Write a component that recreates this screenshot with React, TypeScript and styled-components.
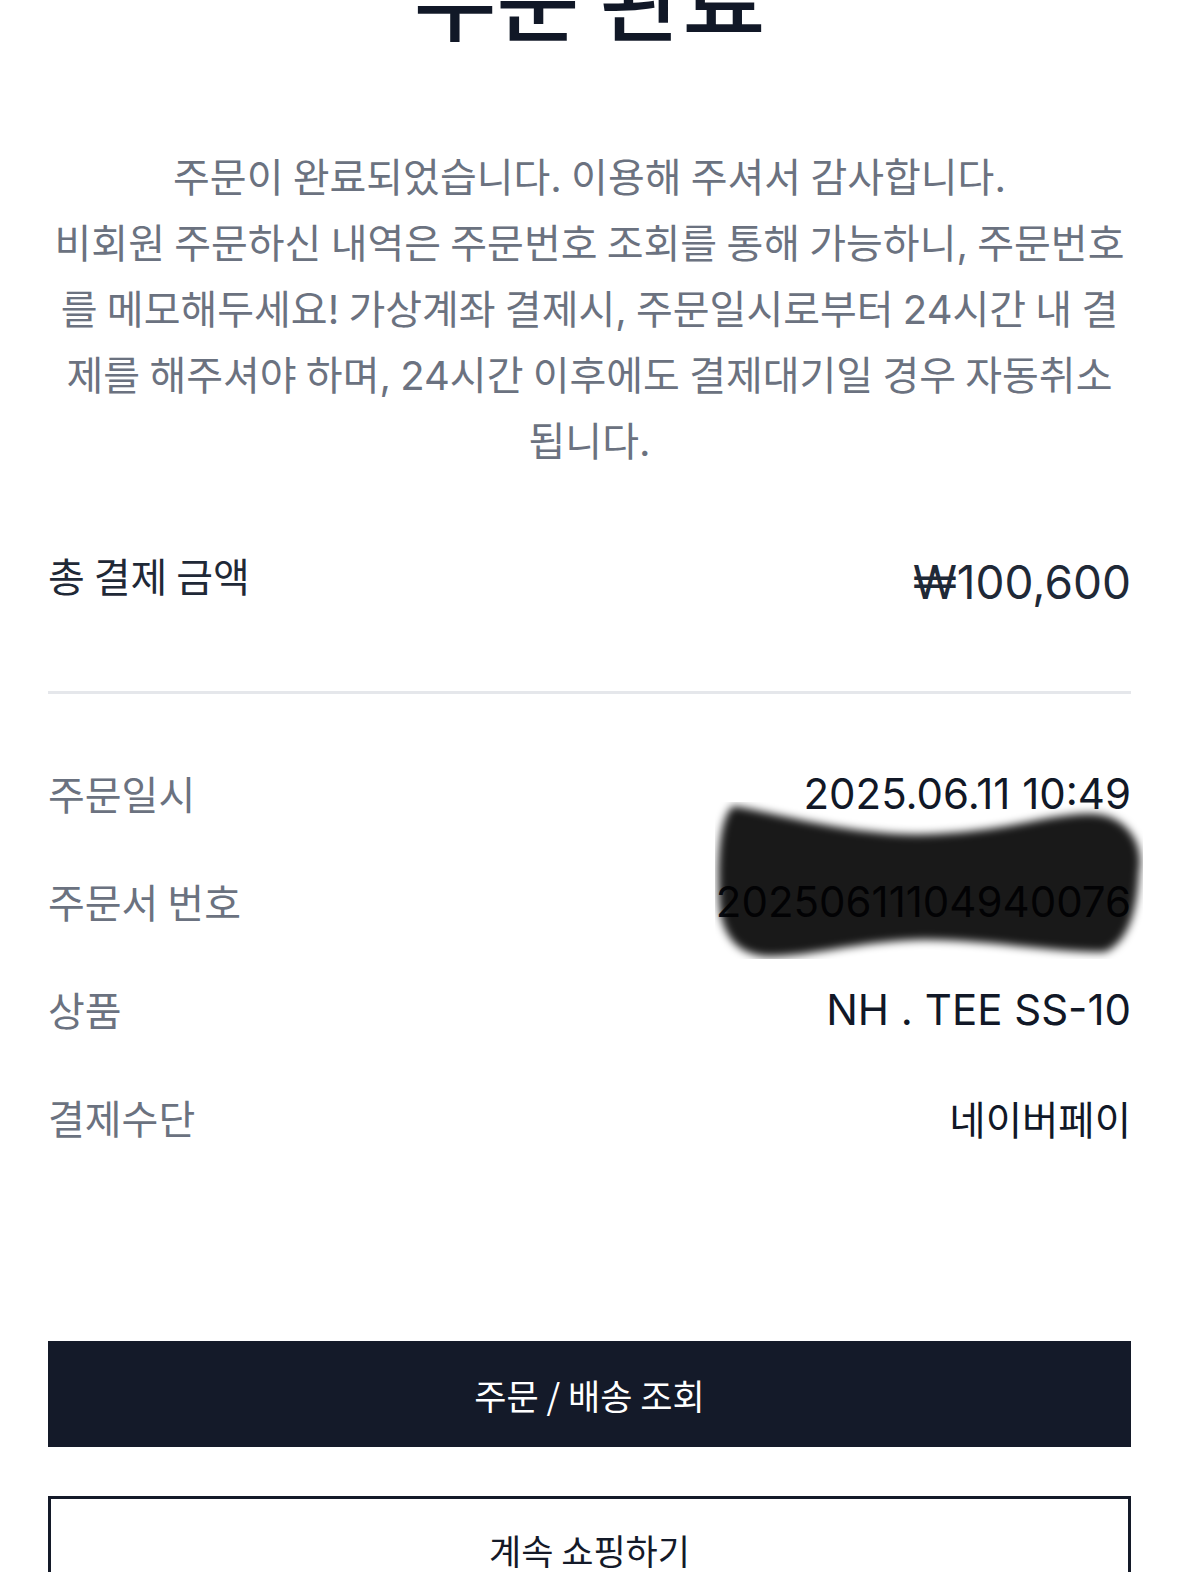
import React from "react";
import styled, { createGlobalStyle } from "styled-components";

const GlobalStyle = createGlobalStyle`
	html, body {
		margin: 0;
		padding: 0;
		background: #ffffff;
	}
	body {
		font-family: "Inter", "Noto Sans CJK KR", sans-serif;
		-webkit-font-smoothing: antialiased;
	}
	* {
		box-sizing: border-box;
	}
`;

const Page = styled.main`
	height: 100vh;
	padding: 0 48px;
	overflow: hidden;
`;

const Title = styled.h1`
	margin: -50px 0 0;
	font-family: "Noto Sans CJK KR", sans-serif;
	font-size: 90px;
	font-weight: 500;
	line-height: 1;
	text-align: center;
	color: #111827;
`;

const Message = styled.p`
	margin: 105px 0 0;
	padding: 0 4px;
	font-family: "Inter", "Noto Sans CJK KR", sans-serif;
	font-size: 40px;
	line-height: 66px;
	word-spacing: -2px;
	text-align: center;
	word-break: break-all;
	color: #6b7280;
`;

const TotalRow = styled.section`
	display: flex;
	justify-content: space-between;
	align-items: flex-start;
	margin-top: 75px;
	padding-bottom: 77px;
	border-bottom: 3px solid #e5e7eb;
`;

const TotalLabel = styled.span`
	font-family: "Noto Sans CJK KR", sans-serif;
	font-size: 40px;
	line-height: 50px;
	color: #1f2937;
`;

const TotalAmount = styled.span`
	font-size: 46px;
	line-height: 64px;
	color: #1f2937;
`;

const InfoList = styled.dl`
	margin: 45px 0 0;
`;

const InfoRow = styled.div`
	position: relative;
	display: flex;
	justify-content: space-between;
	align-items: center;
	height: 108px;
`;

const Label = styled.dt`
	font-family: "Noto Sans CJK KR", sans-serif;
	font-size: 40px;
	color: #6b7280;
`;

const Value = styled.dd<{ $hangul?: boolean }>`
	margin: 0;
	font-size: ${p => (p.$hangul ? "39.5px" : "42px")};
	color: #111827;
`;

const Scribble = styled.svg`
	position: absolute;
	right: -12px;
	top: -45px;
	width: 428px;
	height: 157px;
	pointer-events: none;
`;

const Actions = styled.div`
	display: flex;
	flex-direction: column;
	gap: 49px;
	margin-top: 170px;
`;

const ActionButton = styled.button<{ $variant: "solid" | "outline" }>`
	display: flex;
	align-items: center;
	justify-content: center;
	flex-shrink: 0;
	height: 106px;
	width: 100%;
	border: 3px solid #141a29;
	border-radius: 0;
	background: ${p => (p.$variant === "solid" ? "#141a29" : "#ffffff")};
	color: ${p => (p.$variant === "solid" ? "#ffffff" : "#141a29")};
	font-family: "Noto Sans CJK KR", sans-serif;
	font-size: 35px;
	cursor: pointer;
`;

const rows = [
	{ label: "주문일시", value: "2025.06.11 10:49" },
	{ label: "주문서 번호", value: "20250611104940076", hidden: true },
	{ label: "상품", value: "NH . TEE SS-10" },
	{ label: "결제수단", value: "네이버페이", hangul: true },
];

export default function App() {
	return (
		<>
			<GlobalStyle />
			<Page>
				<Title>주문 완료</Title>
				<Message>
					주문이 완료되었습니다. 이용해 주셔서 감사합니다.
					<br />
					비회원 주문하신 내역은 주문번호 조회를 통해 가능하니, 주문번호를 메모해두세요! 가상계좌
					결제시, 주문일시로부터 24시간 내 결제를 해주셔야 하며, 24시간 이후에도 결제대기일 경우
					자동취소됩니다.
				</Message>

				<TotalRow>
					<TotalLabel>총 결제 금액</TotalLabel>
					<TotalAmount>₩100,600</TotalAmount>
				</TotalRow>

				<InfoList>
					{rows.map(row => (
						<InfoRow key={row.label}>
							<Label>{row.label}</Label>
							<Value $hangul={row.hangul}>{row.value}</Value>
							{row.hidden && (
								// hand-drawn redaction over the order number
								<Scribble viewBox="0 0 428 157">
									<defs>
										<filter id="smudge" x="-10%" y="-10%" width="120%" height="120%">
											<feGaussianBlur stdDeviation="4" />
										</filter>
									</defs>
									<path
										d="M18,4 C60,10 140,36 220,32 C300,28 340,10 380,12 C410,14 430,40 424,70 C422,110 413,140 390,150 C330,150 260,136 200,138 C140,140 90,156 50,154 C20,152 6,130 4,100 C2,60 4,16 18,4 Z"
										fill="#000"
										fillOpacity="0.9"
										filter="url(#smudge)"
									/>
								</Scribble>
							)}
						</InfoRow>
					))}
				</InfoList>

				<Actions>
					<ActionButton $variant="solid">주문 / 배송 조회</ActionButton>
					<ActionButton $variant="outline">계속 쇼핑하기</ActionButton>
				</Actions>
			</Page>
		</>
	);
}
